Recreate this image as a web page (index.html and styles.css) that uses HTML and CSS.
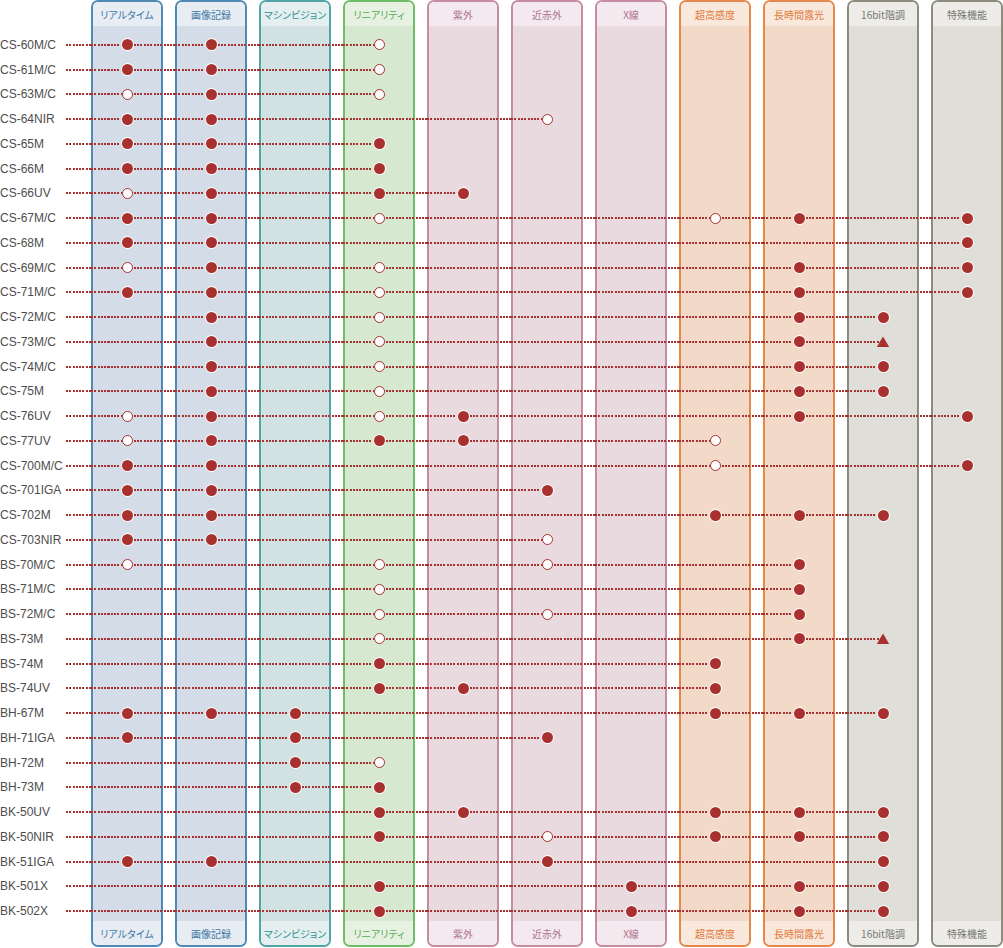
FILE: index.html
```html
<!DOCTYPE html>
<html lang="ja">
<head>
<meta charset="utf-8">
<title>機能比較表</title>
<link rel="stylesheet" href="styles.css">
</head>
<body>
<div class="chart">
  <div class="cols">
    <div class="col blue"><div class="hd">リアルタイム</div><div class="bd"></div><div class="ft">リアルタイム</div></div>
    <div class="col blue"><div class="hd">画像記録</div><div class="bd"></div><div class="ft">画像記録</div></div>
    <div class="col teal"><div class="hd">マシンビジョン</div><div class="bd"></div><div class="ft">マシンビジョン</div></div>
    <div class="col green"><div class="hd">リニアリティ</div><div class="bd"></div><div class="ft">リニアリティ</div></div>
    <div class="col pink"><div class="hd">紫外</div><div class="bd"></div><div class="ft">紫外</div></div>
    <div class="col pink"><div class="hd">近赤外</div><div class="bd"></div><div class="ft">近赤外</div></div>
    <div class="col pink"><div class="hd">X線</div><div class="bd"></div><div class="ft">X線</div></div>
    <div class="col orange"><div class="hd">超高感度</div><div class="bd"></div><div class="ft">超高感度</div></div>
    <div class="col orange"><div class="hd">長時間露光</div><div class="bd"></div><div class="ft">長時間露光</div></div>
    <div class="col gray"><div class="hd">16bit階調</div><div class="bd"></div><div class="ft">16bit階調</div></div>
    <div class="col gray"><div class="hd">特殊機能</div><div class="bd"></div><div class="ft">特殊機能</div></div>
  </div>
  <div class="rows">
    <div class="row"><span class="lb">CS-60M/C</span><i class="c"><b class="f"></b></i><i class="c"><b class="f"></b></i><i class="c"></i><i class="c e"><b class="o"></b></i></div>
    <div class="row"><span class="lb">CS-61M/C</span><i class="c"><b class="f"></b></i><i class="c"><b class="f"></b></i><i class="c"></i><i class="c e"><b class="o"></b></i></div>
    <div class="row"><span class="lb">CS-63M/C</span><i class="c"><b class="o"></b></i><i class="c"><b class="f"></b></i><i class="c"></i><i class="c e"><b class="o"></b></i></div>
    <div class="row"><span class="lb">CS-64NIR</span><i class="c"><b class="f"></b></i><i class="c"><b class="f"></b></i><i class="c"></i><i class="c"></i><i class="c"></i><i class="c e"><b class="o"></b></i></div>
    <div class="row"><span class="lb">CS-65M</span><i class="c"><b class="f"></b></i><i class="c"><b class="f"></b></i><i class="c"></i><i class="c e"><b class="f"></b></i></div>
    <div class="row"><span class="lb">CS-66M</span><i class="c"><b class="f"></b></i><i class="c"><b class="f"></b></i><i class="c"></i><i class="c e"><b class="f"></b></i></div>
    <div class="row"><span class="lb">CS-66UV</span><i class="c"><b class="o"></b></i><i class="c"><b class="f"></b></i><i class="c"></i><i class="c"><b class="f"></b></i><i class="c e"><b class="f"></b></i></div>
    <div class="row"><span class="lb">CS-67M/C</span><i class="c"><b class="f"></b></i><i class="c"><b class="f"></b></i><i class="c"></i><i class="c"><b class="o"></b></i><i class="c"></i><i class="c"></i><i class="c"></i><i class="c"><b class="o"></b></i><i class="c"><b class="f"></b></i><i class="c"></i><i class="c e"><b class="f"></b></i></div>
    <div class="row"><span class="lb">CS-68M</span><i class="c"><b class="f"></b></i><i class="c"><b class="f"></b></i><i class="c"></i><i class="c"></i><i class="c"></i><i class="c"></i><i class="c"></i><i class="c"></i><i class="c"></i><i class="c"></i><i class="c e"><b class="f"></b></i></div>
    <div class="row"><span class="lb">CS-69M/C</span><i class="c"><b class="o"></b></i><i class="c"><b class="f"></b></i><i class="c"></i><i class="c"><b class="o"></b></i><i class="c"></i><i class="c"></i><i class="c"></i><i class="c"></i><i class="c"><b class="f"></b></i><i class="c"></i><i class="c e"><b class="f"></b></i></div>
    <div class="row"><span class="lb">CS-71M/C</span><i class="c"><b class="f"></b></i><i class="c"><b class="f"></b></i><i class="c"></i><i class="c"><b class="o"></b></i><i class="c"></i><i class="c"></i><i class="c"></i><i class="c"></i><i class="c"><b class="f"></b></i><i class="c"></i><i class="c e"><b class="f"></b></i></div>
    <div class="row"><span class="lb">CS-72M/C</span><i class="c"></i><i class="c"><b class="f"></b></i><i class="c"></i><i class="c"><b class="o"></b></i><i class="c"></i><i class="c"></i><i class="c"></i><i class="c"></i><i class="c"><b class="f"></b></i><i class="c e"><b class="f"></b></i></div>
    <div class="row"><span class="lb">CS-73M/C</span><i class="c"></i><i class="c"><b class="f"></b></i><i class="c"></i><i class="c"><b class="o"></b></i><i class="c"></i><i class="c"></i><i class="c"></i><i class="c"></i><i class="c"><b class="f"></b></i><i class="c e"><b class="t"></b></i></div>
    <div class="row"><span class="lb">CS-74M/C</span><i class="c"></i><i class="c"><b class="f"></b></i><i class="c"></i><i class="c"><b class="o"></b></i><i class="c"></i><i class="c"></i><i class="c"></i><i class="c"></i><i class="c"><b class="f"></b></i><i class="c e"><b class="f"></b></i></div>
    <div class="row"><span class="lb">CS-75M</span><i class="c"></i><i class="c"><b class="f"></b></i><i class="c"></i><i class="c"><b class="o"></b></i><i class="c"></i><i class="c"></i><i class="c"></i><i class="c"></i><i class="c"><b class="f"></b></i><i class="c e"><b class="f"></b></i></div>
    <div class="row"><span class="lb">CS-76UV</span><i class="c"><b class="o"></b></i><i class="c"><b class="f"></b></i><i class="c"></i><i class="c"><b class="o"></b></i><i class="c"><b class="f"></b></i><i class="c"></i><i class="c"></i><i class="c"></i><i class="c"><b class="f"></b></i><i class="c"></i><i class="c e"><b class="f"></b></i></div>
    <div class="row"><span class="lb">CS-77UV</span><i class="c"><b class="o"></b></i><i class="c"><b class="f"></b></i><i class="c"></i><i class="c"><b class="f"></b></i><i class="c"><b class="f"></b></i><i class="c"></i><i class="c"></i><i class="c e"><b class="o"></b></i></div>
    <div class="row"><span class="lb">CS-700M/C</span><i class="c"><b class="f"></b></i><i class="c"><b class="f"></b></i><i class="c"></i><i class="c"></i><i class="c"></i><i class="c"></i><i class="c"></i><i class="c"><b class="o"></b></i><i class="c"></i><i class="c"></i><i class="c e"><b class="f"></b></i></div>
    <div class="row"><span class="lb">CS-701IGA</span><i class="c"><b class="f"></b></i><i class="c"><b class="f"></b></i><i class="c"></i><i class="c"></i><i class="c"></i><i class="c e"><b class="f"></b></i></div>
    <div class="row"><span class="lb">CS-702M</span><i class="c"><b class="f"></b></i><i class="c"><b class="f"></b></i><i class="c"></i><i class="c"></i><i class="c"></i><i class="c"></i><i class="c"></i><i class="c"><b class="f"></b></i><i class="c"><b class="f"></b></i><i class="c e"><b class="f"></b></i></div>
    <div class="row"><span class="lb">CS-703NIR</span><i class="c"><b class="f"></b></i><i class="c"><b class="f"></b></i><i class="c"></i><i class="c"></i><i class="c"></i><i class="c e"><b class="o"></b></i></div>
    <div class="row"><span class="lb">BS-70M/C</span><i class="c"><b class="o"></b></i><i class="c"></i><i class="c"></i><i class="c"><b class="o"></b></i><i class="c"></i><i class="c"><b class="o"></b></i><i class="c"></i><i class="c"></i><i class="c e"><b class="f"></b></i></div>
    <div class="row"><span class="lb">BS-71M/C</span><i class="c"></i><i class="c"></i><i class="c"></i><i class="c"><b class="o"></b></i><i class="c"></i><i class="c"></i><i class="c"></i><i class="c"></i><i class="c e"><b class="f"></b></i></div>
    <div class="row"><span class="lb">BS-72M/C</span><i class="c"></i><i class="c"></i><i class="c"></i><i class="c"><b class="o"></b></i><i class="c"></i><i class="c"><b class="o"></b></i><i class="c"></i><i class="c"></i><i class="c e"><b class="f"></b></i></div>
    <div class="row"><span class="lb">BS-73M</span><i class="c"></i><i class="c"></i><i class="c"></i><i class="c"><b class="o"></b></i><i class="c"></i><i class="c"></i><i class="c"></i><i class="c"></i><i class="c"><b class="f"></b></i><i class="c e"><b class="t"></b></i></div>
    <div class="row"><span class="lb">BS-74M</span><i class="c"></i><i class="c"></i><i class="c"></i><i class="c"><b class="f"></b></i><i class="c"></i><i class="c"></i><i class="c"></i><i class="c e"><b class="f"></b></i></div>
    <div class="row"><span class="lb">BS-74UV</span><i class="c"></i><i class="c"></i><i class="c"></i><i class="c"><b class="f"></b></i><i class="c"><b class="f"></b></i><i class="c"></i><i class="c"></i><i class="c e"><b class="f"></b></i></div>
    <div class="row"><span class="lb">BH-67M</span><i class="c"><b class="f"></b></i><i class="c"><b class="f"></b></i><i class="c"><b class="f"></b></i><i class="c"></i><i class="c"></i><i class="c"></i><i class="c"></i><i class="c"><b class="f"></b></i><i class="c"><b class="f"></b></i><i class="c e"><b class="f"></b></i></div>
    <div class="row"><span class="lb">BH-71IGA</span><i class="c"><b class="f"></b></i><i class="c"></i><i class="c"><b class="f"></b></i><i class="c"></i><i class="c"></i><i class="c e"><b class="f"></b></i></div>
    <div class="row"><span class="lb">BH-72M</span><i class="c"></i><i class="c"></i><i class="c"><b class="f"></b></i><i class="c e"><b class="o"></b></i></div>
    <div class="row"><span class="lb">BH-73M</span><i class="c"></i><i class="c"></i><i class="c"><b class="f"></b></i><i class="c e"><b class="f"></b></i></div>
    <div class="row"><span class="lb">BK-50UV</span><i class="c"></i><i class="c"></i><i class="c"></i><i class="c"><b class="f"></b></i><i class="c"><b class="f"></b></i><i class="c"></i><i class="c"></i><i class="c"><b class="f"></b></i><i class="c"><b class="f"></b></i><i class="c e"><b class="f"></b></i></div>
    <div class="row"><span class="lb">BK-50NIR</span><i class="c"></i><i class="c"></i><i class="c"></i><i class="c"><b class="f"></b></i><i class="c"></i><i class="c"><b class="o"></b></i><i class="c"></i><i class="c"><b class="f"></b></i><i class="c"><b class="f"></b></i><i class="c e"><b class="f"></b></i></div>
    <div class="row"><span class="lb">BK-51IGA</span><i class="c"><b class="f"></b></i><i class="c"><b class="f"></b></i><i class="c"></i><i class="c"></i><i class="c"></i><i class="c"><b class="f"></b></i><i class="c"></i><i class="c"></i><i class="c"></i><i class="c e"><b class="f"></b></i></div>
    <div class="row"><span class="lb">BK-501X</span><i class="c"></i><i class="c"></i><i class="c"></i><i class="c"><b class="f"></b></i><i class="c"></i><i class="c"></i><i class="c"><b class="f"></b></i><i class="c"></i><i class="c"><b class="f"></b></i><i class="c e"><b class="f"></b></i></div>
    <div class="row"><span class="lb">BK-502X</span><i class="c"></i><i class="c"></i><i class="c"></i><i class="c"><b class="f"></b></i><i class="c"></i><i class="c"></i><i class="c"><b class="f"></b></i><i class="c"></i><i class="c"><b class="f"></b></i><i class="c e"><b class="f"></b></i></div>
  </div>
</div>
</body>
</html>
```
FILE: styles.css
```css
html, body {
  margin: 0;
  padding: 0;
  background: #ffffff;
}

body {
  font-family: "Liberation Sans", Arial, "Noto Sans CJK JP", sans-serif;
}

.chart {
  display: grid;
  width: 1003px;
  height: 948px;
}

.cols,
.rows {
  grid-area: 1 / 1;
}

/* ---------- columns ---------- */
.cols {
  display: flex;
  gap: 12px;
  padding-left: 91px;
}

.col {
  flex: none;
  width: 72px;
  height: 947px;
  box-sizing: border-box;
  border: 2px solid;
  border-radius: 7px;
  display: flex;
  flex-direction: column;
  overflow: hidden;
}

.hd,
.ft {
  height: 24px;
  flex: none;
  display: flex;
  align-items: center;
  justify-content: center;
  font-family: "Noto Sans CJK JP", sans-serif;
  font-size: 10px;
  font-feature-settings: "palt";
  white-space: nowrap;
}

.bd {
  flex: 1;
}

.blue   { border-color: #5189b5; color: #3f78a7; }
.blue .hd,   .blue .ft   { background: #e8edf3; }
.blue .bd   { background: #d4dde7; }

.teal   { border-color: #4fa5a7; color: #2e9495; }
.teal .hd,   .teal .ft   { background: #e6efef; }
.teal .bd   { background: #d2e1e2; }

.green  { border-color: #6dbe66; color: #56ab4f; }
.green .hd,  .green .ft  { background: #e7f1e2; }
.green .bd  { background: #d6e8cf; }

.pink   { border-color: #c58ca3; color: #ae7690; }
.pink .hd,   .pink .ft   { background: #f4e9ef; }
.pink .bd   { background: #e9dadf; }

.orange { border-color: #e5884b; color: #df7a3b; }
.orange .hd, .orange .ft { background: #f9e8dc; }
.orange .bd { background: #f3dac8; }

.gray   { border-color: #8c8c7e; color: #777770; }
.gray .hd,   .gray .ft   { background: #edece8; }
.gray .bd   { background: #dfded8; }

/* ---------- rows ---------- */
.rows {
  padding-top: 32.62px;
  display: flex;
  flex-direction: column;
}

.row {
  height: 24.76px;
  display: flex;
  align-items: center;
}

.lb {
  flex: none;
  width: 66px;
  font-size: 12px;
  line-height: 14px;
  color: #4d4d4d;
  white-space: nowrap;
}

.row::before {
  content: none;
}

.lb {
  position: relative;
}

.row .lb + .c {
  margin-left: 25px;
  position: relative;
}

/* the 25px lead segment in front of the first column */
.row .lb + .c::before {
  content: "";
  position: absolute;
  left: -25px;
  top: 50%;
  width: 25px;
  height: 2px;
  margin-top: -1px;
  background: repeating-linear-gradient(to right, #a83232 0 2px, transparent 2px 3.3px);
}

.c {
  flex: none;
  width: 84px;
  height: 12px;
  box-sizing: border-box;
  padding-right: 12px;
  display: flex;
  align-items: center;
  justify-content: center;
  background-image: repeating-linear-gradient(to right, #a83232 0 2px, transparent 2px 3.3px);
  background-repeat: no-repeat;
  background-position: left center;
  background-size: 100% 2px;
}

.c.e {
  background-size: 36px 2px;
}

.f,
.o,
.t {
  display: block;
  flex: none;
}

.f {
  width: 11px;
  height: 11px;
  border-radius: 50%;
  background: #a8302e;
  box-shadow: 0 0 0 1px #ffffff;
}

.o {
  width: 11px;
  height: 11px;
  box-sizing: border-box;
  border-radius: 50%;
  border: 1.5px solid #a8302e;
  background: #ffffff;
}

.t {
  width: 13px;
  height: 11px;
  background: #a8302e;
  clip-path: polygon(50% 0, 100% 100%, 0 100%);
}
```
